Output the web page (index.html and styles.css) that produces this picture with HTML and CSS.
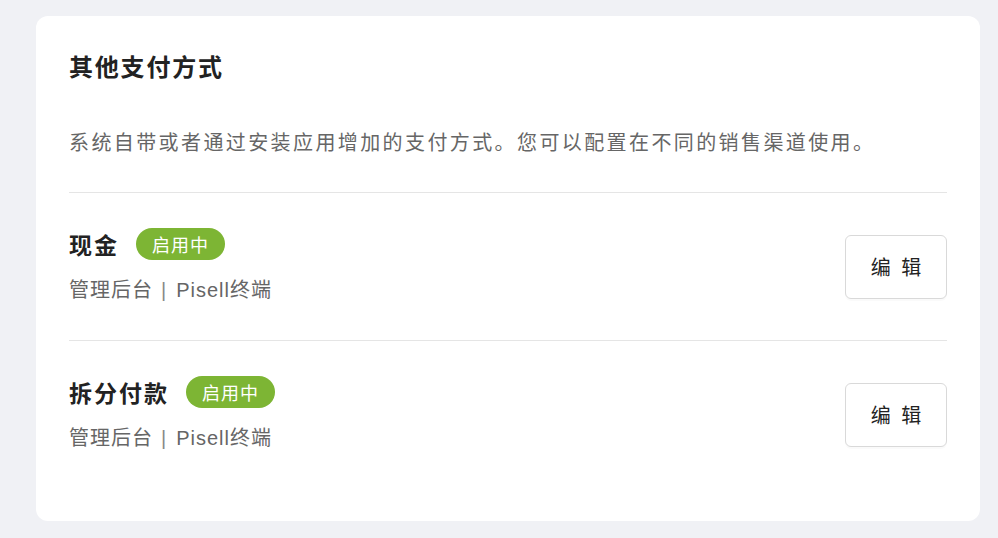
FILE: index.html
```html
<!DOCTYPE html>
<html lang="zh">
<head>
<meta charset="utf-8">
<link rel="stylesheet" href="styles.css">
</head>
<body>
<div class="page">
  <section class="card">
    <h2 class="card-title">其他支付方式</h2>
    <p class="card-desc">系统自带或者通过安装应用增加的支付方式。您可以配置在不同的销售渠道使用。</p>
    <div class="list">
      <div class="row">
        <div class="info">
          <div class="name-line">
            <span class="name">现金</span>
            <span class="badge">启用中</span>
          </div>
          <div class="channels">管理后台<span class="sep">|</span>Pisell终端</div>
        </div>
        <button class="edit-btn">编 辑</button>
      </div>
      <div class="row">
        <div class="info">
          <div class="name-line">
            <span class="name">拆分付款</span>
            <span class="badge">启用中</span>
          </div>
          <div class="channels">管理后台<span class="sep">|</span>Pisell终端</div>
        </div>
        <button class="edit-btn">编 辑</button>
      </div>
    </div>
  </section>
</div>
</body>
</html>
```
FILE: styles.css
```css
* { box-sizing: border-box; }
html, body {
  margin: 0;
  padding: 0;
  background: #f0f1f5;
  font-family: "Liberation Sans", "Noto Sans CJK SC", sans-serif;
}
.page {
  padding: 16px 18px 17px 36px;
}
.card {
  background: #fff;
  border-radius: 12px;
  padding: 48px 33px 33px 33px;
  width: 944px;
}
.card-title {
  margin: 0;
  font-size: 24px;
  line-height: 40px;
  font-weight: 700;
  color: #222;
  letter-spacing: 1.8px;
  margin-top: -16px;
}
.card-desc {
  margin: 43px 0 0;
  font-size: 20px;
  line-height: 24px;
  color: #666;
  letter-spacing: 2.4px;
  padding-bottom: 37px;
  border-bottom: 1px solid #e5e5e5;
}
.row {
  display: flex;
  align-items: center;
  justify-content: space-between;
  height: 147px;
}
.row + .row {
  border-top: 1px solid #e5e5e5;
  height: 148px;
}
.name-line {
  display: flex;
  align-items: center;
  gap: 17px;
  height: 32px;
}
.name {
  font-size: 23px;
  font-weight: 700;
  color: #222;
  letter-spacing: 2px;
}
.badge {
  display: inline-flex;
  align-items: center;
  height: 32px;
  padding: 0 16px;
  border-radius: 16px;
  background: #7db534;
  color: #fff;
  font-size: 18px;
  letter-spacing: 1px;
}
.channels {
  margin-top: 15px;
  font-size: 20px;
  line-height: 30px;
  color: #666;
  letter-spacing: 1px;
}
.sep {
  color: #888;
  margin: 0 9px 0 8px;
}
.edit-btn {
  width: 102px;
  height: 64px;
  border: 1px solid #d9d9d9;
  border-radius: 6px;
  background: #fff;
  box-shadow: 0 2px 0 rgba(0,0,0,0.02);
  font-family: "Noto Sans CJK SC", sans-serif;
  font-size: 20px;
  color: #222;
  letter-spacing: 3px;
  padding: 0 0 0 3px;
  cursor: pointer;
}
```
